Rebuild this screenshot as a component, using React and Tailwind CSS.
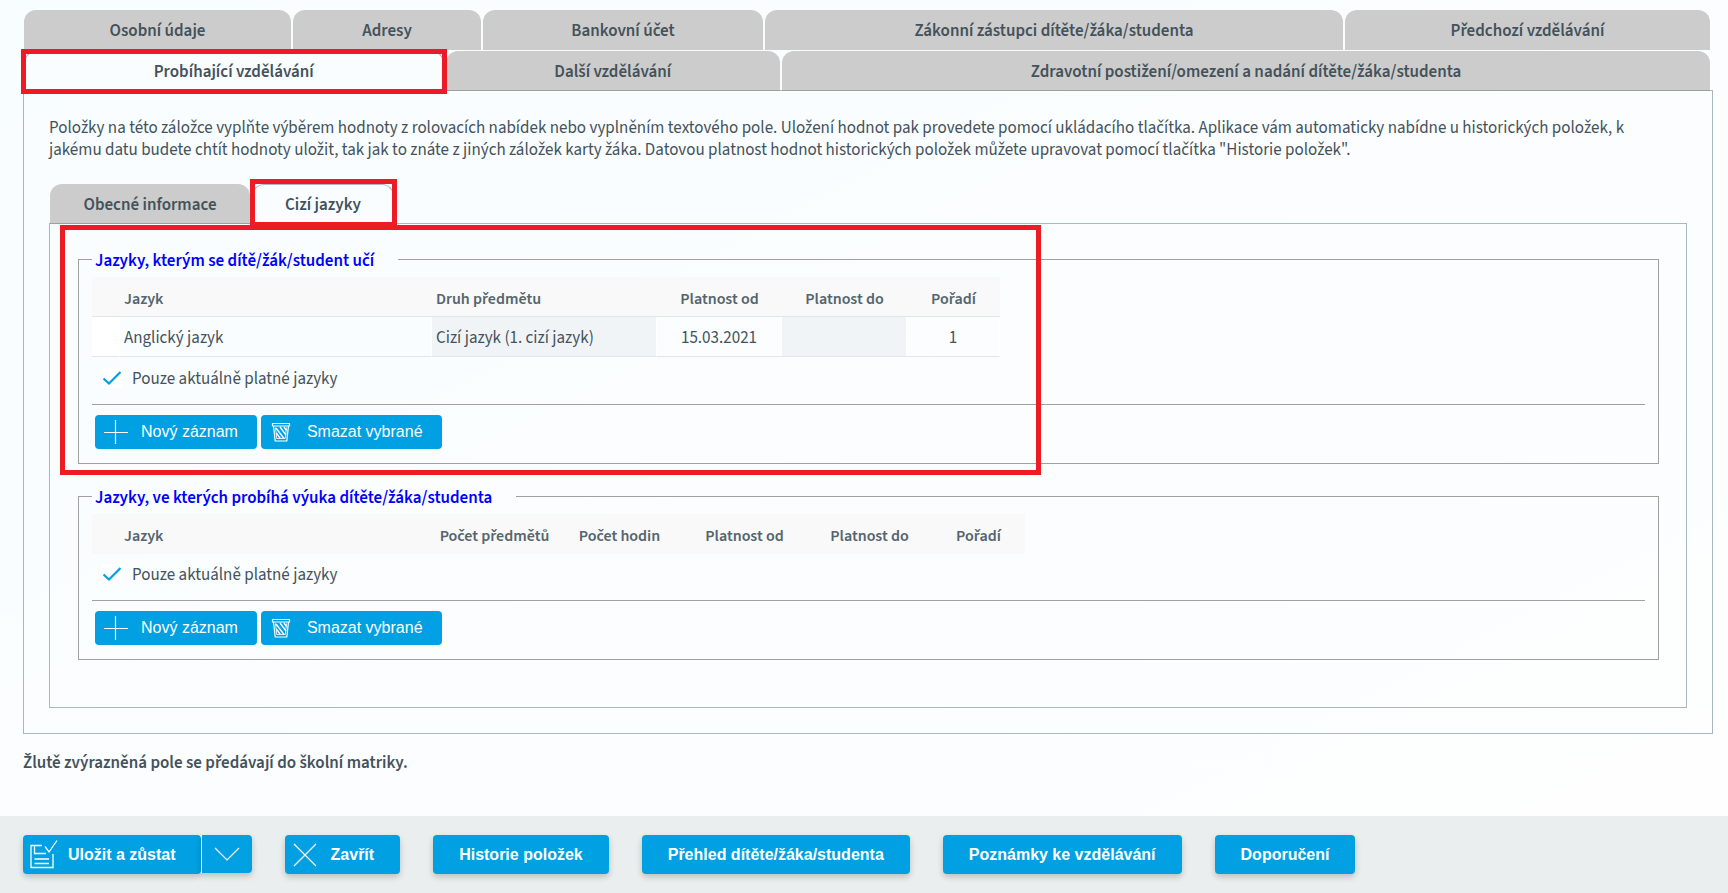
import React from "react";

const cx = (...parts) => parts.filter(Boolean).join(" ");

function Highlight({ className }) {
  return (
    <span
      aria-hidden="true"
      className={cx("pointer-events-none absolute z-20 border-5 border-[#ed1c24]", className)}
    />
  );
}

function Tab({ children, grow, active, lined, className }) {
  return (
    <button
      type="button"
      role="tab"
      aria-selected={!!active}
      className={cx(
        "relative h-10 rounded-t-xl text-[17px] leading-5 font-semibold whitespace-nowrap text-[#44525b]",
        active ? "border border-b-0 border-[#a9b8be] bg-[#fafdff]" : "bg-[#cccccc] pt-0.5",
        lined && !active && "border-b border-[#9e9e9e]",
        grow,
        className
      )}
    >
      {children}
    </button>
  );
}

function PlusIcon() {
  return (
    <svg width="26" height="26" viewBox="0 0 26 26" fill="none" stroke="white" strokeWidth="1.2" aria-hidden="true">
      <path d="M12.500 1v24M1 13.500h24" />
    </svg>
  );
}

function TrashIcon() {
  return (
    <svg width="20" height="20" viewBox="0 0 20 20" fill="none" stroke="white" strokeWidth="1.2" aria-hidden="true">
      <path d="M1.500 1.500h17v2.500h-17z" />
      <path d="M2.500 4l1.700 15h11.600L17.500 4" />
      <path d="M4.500 5.500l1.200 11h8.600l1.200-11" strokeWidth="0.8" />
      <path d="M5 6l8 10.500M9 5l6 8M13 5l2.500 3.500M5.300 11l4 5.500" strokeWidth="1.400" />
    </svg>
  );
}

function SaveIcon() {
  return (
    <svg width="28" height="30" viewBox="0 0 28 30" fill="none" stroke="white" strokeWidth="1.3" aria-hidden="true">
      <path d="M12 5.500H1v22h22V14" />
      <path d="M4.500 5.500v8h11.500M4.500 19h14.500M4.500 23.500h14.500" />
      <path d="M15 6.500l4 5.500L27 0.500" />
    </svg>
  );
}

function ChevronIcon() {
  return (
    <svg width="26" height="14" viewBox="0 0 26 14" fill="none" stroke="white" strokeWidth="1.2" aria-hidden="true">
      <path d="M1 1l12 12L25 1" />
    </svg>
  );
}

function CloseIcon() {
  return (
    <svg width="24" height="24" viewBox="0 0 24 24" fill="none" stroke="white" strokeWidth="1.2" aria-hidden="true">
      <path d="M1 1l22 22M23 1L1 23" />
    </svg>
  );
}

function RecordButton({ icon, children, className }) {
  return (
    <button
      type="button"
      className={cx(
        "flex h-[34px] items-center rounded-sm bg-[#00a0e3] font-['Liberation_Sans',Arial,sans-serif] text-base text-white",
        className
      )}
    >
      {icon}
      {children}
    </button>
  );
}

function LanguageGroup({ id, title, children, className }) {
  return (
    <fieldset className={cx("min-w-0 border border-[#a0a0a0] px-[13px] pb-3.5", className)}>
      <legend className="pt-1 pr-6 pl-[3px] text-[17px] leading-[18px] font-semibold text-[#0000ff]">{title}</legend>
      {children}
      <div className="flex h-[46px] items-start pt-[9px] pl-2.5">
        <label htmlFor={id} className="flex items-center gap-2.5 text-[17px] leading-5">
          <span className="relative flex size-5">
            <input
              id={id}
              type="checkbox"
              defaultChecked
              className="peer size-5 appearance-none rounded-xs bg-white"
            />
            <svg
              className="pointer-events-none absolute inset-0 hidden peer-checked:block"
              width="20"
              height="20"
              viewBox="0 0 20 20"
              fill="none"
              stroke="#00a0e3"
              strokeWidth="2.2"
              aria-hidden="true"
            >
              <path d="M1.500 10.500L7 15.500L18.500 4" />
            </svg>
          </span>
          <span className="pt-0.5">Pouze aktuálně platné jazyky</span>
        </label>
      </div>
      <hr className="border-t border-[#a0a0a0]" />
      <div className="mt-2.5 ml-[3px] flex gap-1">
        <RecordButton icon={<PlusIcon />} className="gap-3 pr-[19px] pl-2">
          Nový záznam
        </RecordButton>
        <RecordButton icon={<TrashIcon />} className="gap-4 pr-[19px] pl-2.5">
          Smazat vybrané
        </RecordButton>
      </div>
    </fieldset>
  );
}

function HeadCell({ children, left, lined }) {
  return (
    <th
      scope="col"
      className={cx(
        "h-10 bg-[#f9f9f9] px-0 pt-1 pb-0 font-semibold",
        left ? "pl-1 text-left" : "text-center",
        lined && "border-b border-[#e3e6e7]"
      )}
    >
      {children}
    </th>
  );
}

function Cell({ children, className }) {
  return (
    <td className={cx("h-10 border-r border-b border-r-white border-b-[#e3e6e7] px-0 pt-1 pb-0", className)}>
      {children}
    </td>
  );
}

function FooterButton({ children, className }) {
  return (
    <button
      type="button"
      className={cx(
        "flex h-[39px] items-center rounded-sm bg-[#00a0e3] text-base font-bold whitespace-nowrap text-white shadow-[0_3px_6px_rgba(0,0,0,0.2)]",
        className
      )}
    >
      {children}
    </button>
  );
}

export default function App() {
  return (
    <div className="flex min-h-screen flex-col bg-linear-to-br from-[#f8fdff] via-[#fbfdfe] to-[#fefefe] font-['Source_Sans_3','Source_Sans_Pro','Noto_Sans',sans-serif] text-[#44525b]">
      <main className="grow pt-2.5 pr-[15px] pb-10 pl-[23px]">
        <div role="tablist" aria-label="Karta žáka" className="flex flex-col gap-px pr-[3px] pl-px">
          <div className="flex gap-0.5">
            <Tab grow="flex-[267]">Osobní údaje</Tab>
            <Tab grow="flex-[188]">Adresy</Tab>
            <Tab grow="flex-[280]">Bankovní účet</Tab>
            <Tab grow="flex-[578]">Zákonní zástupci dítěte/žáka/studenta</Tab>
            <Tab grow="flex-[365]">Předchozí vzdělávání</Tab>
          </div>
          <div className="relative z-10 flex gap-0.5">
            <Tab active grow="flex-[418]">
              Probíhající vzdělávání
              <Highlight className="-top-[3px] -right-1 -bottom-[3px] -left-1" />
            </Tab>
            <Tab lined grow="flex-[335]">Další vzdělávání</Tab>
            <Tab lined grow="flex-[929]">Zdravotní postižení/omezení a nadání dítěte/žáka/studenta</Tab>
          </div>
        </div>

        <section className="-mt-px border border-[#a9b8be] px-[25px] pt-[26px] pb-[25px]">
          <p className="pr-6 text-[17px] leading-[22px]">
            Položky na této záložce vyplňte výběrem hodnoty z rolovacích nabídek nebo vyplněním textového pole. Uložení
            hodnot pak provedete pomocí ukládacího tlačítka. Aplikace vám automaticky nabídne u historických položek, k
            jakému datu budete chtít hodnoty uložit, tak jak to znáte z jiných záložek karty žáka. Datovou platnost
            hodnot historických položek můžete upravovat pomocí tlačítka "Historie položek".
          </p>

          <div role="tablist" aria-label="Probíhající vzdělávání" className="relative z-10 mt-[23px] flex gap-0.5 pl-px">
            <Tab lined className="w-[200px]">Obecné informace</Tab>
            <Tab active className="w-[142px]">
              Cizí jazyky
              <Highlight className="-top-[6px] -right-1 -bottom-[3px] -left-[3px]" />
            </Tab>
          </div>

          <div className="-mt-px border border-[#a9b8be] pt-6 pr-[27px] pb-[47px] pl-7">
            <div className="relative">
              <Highlight className="-top-[23px] -bottom-[11px] -left-[18px] w-[981px]" />
              <LanguageGroup id="current-learned" title="Jazyky, kterým se dítě/žák/student učí">
                <table className="mt-[7px] mb-px w-[908px] table-fixed border-separate border-spacing-0">
                  <colgroup>
                    <col className="w-7" />
                    <col className="w-[312px]" />
                    <col className="w-[225px]" />
                    <col className="w-[125px]" />
                    <col className="w-[125px]" />
                    <col className="w-[93px]" />
                  </colgroup>
                  <thead>
                    <tr className="text-base text-[#55656e]">
                      <HeadCell lined />
                      <HeadCell lined left>Jazyk</HeadCell>
                      <HeadCell lined left>Druh předmětu</HeadCell>
                      <HeadCell lined>Platnost od</HeadCell>
                      <HeadCell lined>Platnost do</HeadCell>
                      <HeadCell lined>Pořadí</HeadCell>
                    </tr>
                  </thead>
                  <tbody>
                    <tr className="text-[17px]">
                      <Cell className="bg-white" />
                      <Cell className="pl-1">Anglický jazyk</Cell>
                      <Cell className="bg-[#f1f4f6] pl-1">Cizí jazyk (1. cizí jazyk)</Cell>
                      <Cell className="text-center">15.03.2021</Cell>
                      <Cell className="bg-[#f1f4f6]" />
                      <Cell className="text-center">1</Cell>
                    </tr>
                  </tbody>
                </table>
              </LanguageGroup>
            </div>

            <LanguageGroup
              id="current-teaching"
              title="Jazyky, ve kterých probíhá výuka dítěte/žáka/studenta"
              className="mt-[21px]"
            >
              <table className="mt-[7px] w-[933px] table-fixed border-separate border-spacing-0">
                <colgroup>
                  <col className="w-7" />
                  <col className="w-[312px]" />
                  <col className="w-[125px]" />
                  <col className="w-[125px]" />
                  <col className="w-[125px]" />
                  <col className="w-[125px]" />
                  <col className="w-[93px]" />
                </colgroup>
                <thead>
                  <tr className="text-base text-[#55656e]">
                    <HeadCell />
                    <HeadCell left>Jazyk</HeadCell>
                    <HeadCell>Počet předmětů</HeadCell>
                    <HeadCell>Počet hodin</HeadCell>
                    <HeadCell>Platnost od</HeadCell>
                    <HeadCell>Platnost do</HeadCell>
                    <HeadCell>Pořadí</HeadCell>
                  </tr>
                </thead>
              </table>
            </LanguageGroup>
          </div>
        </section>

        <p className="mt-[17px] text-[17px] leading-6 font-semibold">
          Žlutě zvýrazněná pole se předávají do školní matriky.
        </p>
      </main>

      <footer className="flex flex-wrap gap-[33px] bg-[#eaeeef] px-[23px] pt-[19px] pb-[19px] font-['Liberation_Sans',Arial,sans-serif]">
        <div className="flex items-start">
          <FooterButton className="gap-2.5 pr-[25px] pl-[7px]">
            <SaveIcon />
            Uložit a zůstat
          </FooterButton>
          <button
            type="button"
            aria-label="Další možnosti uložení"
            className="flex h-[38px] w-[51px] items-center justify-center rounded-r-sm border-l border-white bg-[#00a0e3] shadow-[0_3px_6px_rgba(0,0,0,0.2)]"
          >
            <ChevronIcon />
          </button>
        </div>
        <FooterButton className="gap-3.5 pr-[26px] pl-2">
          <CloseIcon />
          Zavřít
        </FooterButton>
        <FooterButton className="px-[26px]">Historie položek</FooterButton>
        <FooterButton className="px-[26px]">Přehled dítěte/žáka/studenta</FooterButton>
        <FooterButton className="px-[26px]">Poznámky ke vzdělávání</FooterButton>
        <FooterButton className="px-[26px]">Doporučení</FooterButton>
      </footer>
    </div>
  );
}
